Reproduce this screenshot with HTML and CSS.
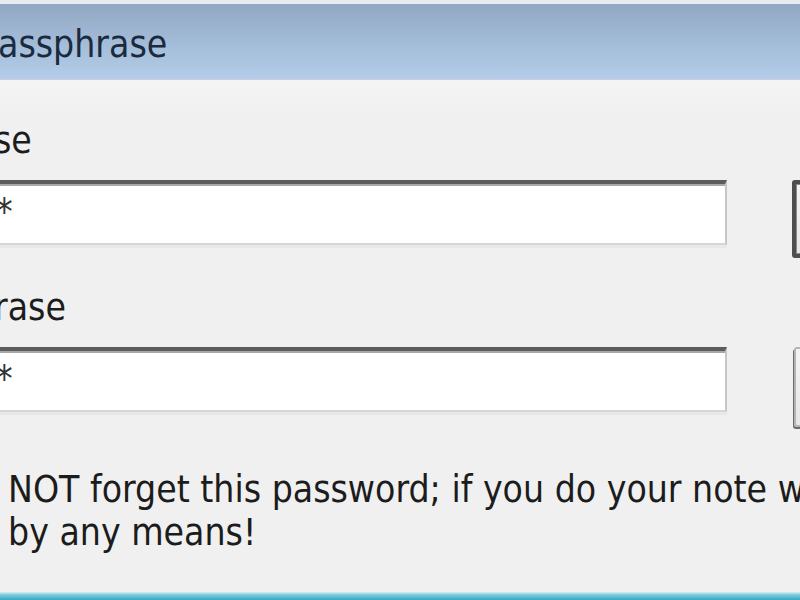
FILE: index.html
```html
<!DOCTYPE html>
<html lang="en">

<head>
    <meta charset="UTF-8">
    <meta name="viewport" content="width=device-width, initial-scale=1.0">
    <title>Passphrase</title>
    <link rel="stylesheet" href="styles.css">
</head>

<body>
    <div class="window">
        <div class="titlebar">
            <span class="title">assphrase</span>
        </div>

        <div class="content">
            <div class="field first">
                <label class="label">se</label>
                <div class="input"><span class="mask">*</span></div>
                <button class="btn default"></button>
            </div>

            <div class="field second">
                <label class="label">rase</label>
                <div class="input"><span class="mask">*</span></div>
                <button class="btn"></button>
            </div>

            <p class="note">NOT forget this password; if you do your note w<br>by any means!</p>
        </div>

        <div class="bottom-edge"></div>
    </div>
</body>

</html>
```

FILE: styles.css
```css
html, body {
    margin: 0;
    padding: 0;
}

body {
    width: 800px;
    height: 600px;
    overflow: hidden;
    background-color: #f0f0f0;
    font-family: "DejaVu Sans", sans-serif;
    font-stretch: condensed;
    color: #1c1c1c;
}

.window {
    display: flex;
    flex-direction: column;
    height: 600px;
}

.titlebar {
    border-top: 4px solid #e6ecf2;
    border-bottom: 1px solid #c8cde0;
    padding: 19px 0 13px 0;
    background: linear-gradient(#92a8c2, #a4bdd9 55%, #b3cdea);
}

.title {
    display: block;
    margin-left: -2px;
    font-size: 37px;
    line-height: 43px;
    color: #1b2a3e;
    white-space: nowrap;
}

.content {
    background: linear-gradient(#f4f4f4, #f0f0f0 40px);
    flex: 1;
}

.field {
    display: grid;
    grid-template-columns: 727px 100px;
    column-gap: 65px;
    row-gap: 18px;
    align-items: start;
}

.field.first {
    margin-top: 39px;
}

.field.second {
    margin-top: 28px;
}

.label {
    grid-column: 1;
    margin-left: -6px;
    font-size: 37px;
    line-height: 43px;
    white-space: nowrap;
}

.input {
    grid-column: 1;
    box-sizing: border-box;
    height: 65px;
    background: #fff;
    border-top: 4px solid #5c5c5c;
    border-right: 2px solid #c6c6c6;
    border-bottom: 2px solid #d6d6d6;
    box-shadow: inset 0 2px 0 #a8a8a8, 0 3px 0 #e8e8e8;
    overflow: hidden;
}

.mask {
    display: block;
    margin-left: -4px;
    font-size: 37px;
    line-height: 58px;
    color: #333;
}

.btn {
    grid-column: 2;
    box-sizing: border-box;
    height: 78px;
    padding: 0;
    background: linear-gradient(#f4f4f4, #e6e6e6);
    border: 2px solid #b4b4b4;
    border-radius: 3px;
}

.btn.default {
    border: 4px solid #4e4e4e;
    box-shadow: inset 0 0 0 1px #8a8a8a;
}

.second .btn {
    height: 80px;
    margin-left: 2px;
    box-shadow: -1px 2px 0 #6a6a6a;
}

.note {
    margin: 41px 0 0 0;
    padding-left: 8px;
    font-size: 37px;
    line-height: 43px;
    white-space: nowrap;
}

.bottom-edge {
    height: 8px;
    background: linear-gradient(#d6f0f6, #7fcadb 35%, #35a9c2);
}
```
